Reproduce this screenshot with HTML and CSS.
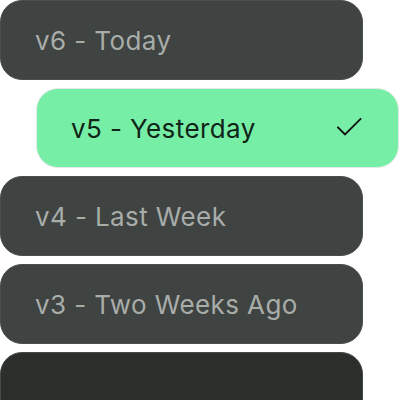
FILE: index.html
```html
<!DOCTYPE html>
<html>
<head>
<meta charset="utf-8">
<link rel="stylesheet" href="styles.css">
</head>
<body>
<div class="list">
  <div class="item"><span class="label">v6 - Today</span></div>
  <div class="item selected"><span class="label">v5 - Yesterday</span>
    <svg class="check" width="28" height="22" viewBox="0 0 28 22"><path d="M3 10.5 L10 17.5 L25.5 2" fill="none" stroke="#111" stroke-width="1.8" stroke-linecap="square"/></svg>
  </div>
  <div class="item"><span class="label">v4 - Last Week</span></div>
  <div class="item"><span class="label">v3 - Two Weeks Ago</span></div>
  <div class="item dark"></div>
</div>
</body>
</html>
```
FILE: styles.css
```css
html, body {
  margin: 0;
  padding: 0;
  background: #ffffff;
  overflow: hidden;
}
.list {
  display: flex;
  flex-direction: column;
  gap: 8px;
  width: 400px;
  height: 400px;
  overflow: hidden;
}
.item {
  box-sizing: border-box;
  width: 363px;
  height: 80px;
  flex: none;
  border-radius: 22px;
  background: #3f4341;
  border: 1px solid #4b4f4d;
  display: flex;
  align-items: center;
  padding-left: 34px;
  font-family: "Inter", "Open Sans", sans-serif;
  font-size: 26px;
  color: #a8adaa;
  letter-spacing: 0.4px;
}
.item.selected {
  margin-left: 36px;
  background: #77eea6;
  border: 1.5px solid #e4ebe6;
  color: #102418;
  padding-left: 34px;
  padding-right: 35px;
  justify-content: space-between;
}
.item.dark {
  background: #2b2f2c;
  border-color: #454947;
}
.check {
  display: block;
}
```
